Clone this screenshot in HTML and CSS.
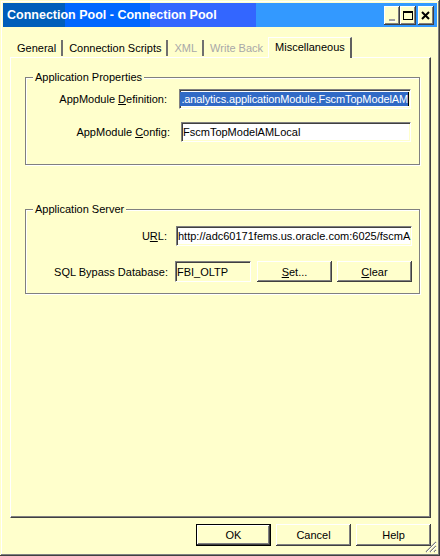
FILE: index.html
```html
<!DOCTYPE html>
<html>
<head>
<meta charset="utf-8">
<link rel="stylesheet" href="styles.css">
</head>
<body>
<div class="window">
  <div class="titlebar">
    <span class="title">Connection Pool - Connection Pool</span>
    <div class="ctrls">
      <span class="cbtn"><svg width="16" height="19" viewBox="0 0 16 19"><rect x="5" y="13" width="6" height="2" fill="#a0a0a0"/><rect x="6" y="15" width="6" height="1" fill="#fff"/></svg></span>
      <span class="cbtn"><svg width="16" height="19" viewBox="0 0 16 19"><rect x="3.5" y="5.5" width="9" height="8" fill="none" stroke="#000"/><rect x="3" y="5" width="10" height="2" fill="#000"/></svg></span>
      <span class="cbtn close"><svg width="16" height="19" viewBox="0 0 16 19"><path d="M4 6 L11 13 M11 6 L4 13" stroke="#000" stroke-width="2" fill="none"/></svg></span>
    </div>
  </div>
  <div class="tabs">
    <span class="tab">General</span>
    <span class="tab">Connection Scripts</span>
    <span class="tab disabled">XML</span>
    <span class="tab disabled nosep">Write Back</span>
    <span class="tab active">Miscellaneous</span>
  </div>
  <div class="panel">
    <div class="group g1">
      <span class="legend">Application Properties</span>
      <div class="row r1">
        <span class="lbl">AppModule <u>D</u>efinition:</span>
        <div class="field sel w232"><span class="hl">.analytics.applicationModule.FscmTopModelAM</span></div>
      </div>
      <div class="row r2">
        <span class="lbl">AppModule <u>C</u>onfig:</span>
        <div class="field w230">FscmTopModelAMLocal</div>
      </div>
    </div>
    <div class="group g2">
      <span class="legend">Application Server</span>
      <div class="row r3">
        <span class="lbl">U<u>R</u>L:</span>
        <div class="field w236">http://adc60171fems.us.oracle.com:6025/fscmA</div>
      </div>
      <div class="row r4">
        <span class="lbl">SQL Bypass Database:</span>
        <div class="field ro w76">FBI_OLTP</div>
        <button class="btn"><span><u>S</u>et...</span></button>
        <button class="btn"><span><u>C</u>lear</span></button>
      </div>
    </div>
  </div>
  <div class="footer">
    <button class="btn default">OK</button>
    <button class="btn">Cancel</button>
    <button class="btn">Help</button>
  </div>
  <svg class="grip" width="12" height="12" viewBox="0 0 12 12">
    <path d="M11 1 L1 11 M11 5 L5 11 M11 9 L9 11" stroke="#808080" stroke-width="1.2"/>
    <path d="M11 2 L2 11 M11 6 L6 11 M11 10 L10 11" stroke="#fff" stroke-width="1"/>
  </svg>
</div>
</body>
</html>
```
FILE: styles.css
```css
* { box-sizing: border-box; }
body {
  margin: 0;
  background: #FFFFCC;
  font-family: "Liberation Sans", Arial, sans-serif;
  font-size: 11px;
  color: #000;
}
.window {
  position: relative;
  width: 440px;
  height: 556px;
  padding: 3px;
  background: #FFFFCC;
  box-shadow: inset -1px -1px 0 #404040, inset 1px 1px 0 #FFFFCC,
              inset -2px -2px 0 #808080, inset 2px 2px 0 #ffffff;
  display: flex;
  flex-direction: column;
}
.titlebar {
  height: 24px;
  display: flex;
  align-items: center;
  justify-content: space-between;
  padding: 0 3px 0 4px;
  background: linear-gradient(to right, #005EBA 0 62px, #0066FF 62px 147px, #3366FF 147px 253px, #3399FF 253px);
}
.title {
  color: #fff;
  font-weight: bold;
  font-size: 12.5px;
}
.ctrls { display: flex; align-items: center; }
.cbtn {
  width: 16px;
  height: 19px;
  background: #FFFFCC;
  box-shadow: inset -1px -1px 0 #404040, inset 1px 1px 0 #fff, inset -2px -2px 0 #808080;
  display: flex;
}
.cbtn.close { margin-left: 2px; }
.tabs {
  height: 30px;
  display: flex;
  align-items: flex-end;
  padding-left: 8px;
}
.tab {
  height: 16px;
  line-height: 16px;
  padding: 0 5px 0 6px;
  margin-bottom: 1px;
  border-right: 2px solid #707070;
  white-space: nowrap;
  color: #000;
}
.tab.disabled { color: #a8a8a8; }
.tab.nosep { border-right: none; }
.tab.active {
  position: relative;
  z-index: 1;
  height: 21px;
  line-height: 19px;
  margin-bottom: -1px;
  padding: 0 5px 0 6px;
  border-top: 1px solid #fff;
  border-left: 1px solid #fff;
  border-right: 2px solid #606060;
  background: #FFFFCC;
  color: #000;
}
.panel {
  margin-left: 7px;
  width: 421px;
  height: 461px;
  border-top: 1px solid #fff;
  border-left: 1px solid #fff;
  border-right: 1px solid #404040;
  border-bottom: 1px solid #404040;
  box-shadow: inset -1px -1px 0 #808080;
  padding: 19px 0 0 14px;
}
.group {
  position: relative;
  width: 395px;
  border: 1px solid #808080;
  box-shadow: 1px 1px 0 #fff, inset 1px 1px 0 #fff;
  display: flex;
  flex-direction: column;
}
.g1 { height: 88px; padding: 11px 8px 0 0; gap: 13px; }
.g2 { height: 85px; margin-top: 44px; padding: 16px 7px 0 0; gap: 15px; }
.legend {
  position: absolute;
  top: -8px;
  left: 7px;
  padding: 0 2px;
  line-height: 14px;
  background: #FFFFCC;
}
.row {
  display: flex;
  justify-content: flex-end;
  align-items: center;
}
.r1 .lbl { margin-right: 12px; }
.r2 .lbl { margin-right: 11px; }
.r3 .lbl { margin-right: 9px; }
.r4 .lbl { margin-right: 7px; }
.field {
  height: 20px;
  background: #fff;
  border: 1px solid;
  border-color: #808080 #fff #fff #808080;
  box-shadow: inset 1px 1px 0 #404040, inset -1px -1px 0 #FFFFCC;
  padding: 0 1px 0 1px;
  display: flex;
  align-items: center;
  overflow: hidden;
  white-space: nowrap;
}
.field.sel { justify-content: flex-end; padding: 0 2px 0 1px; }
.hl {
  background: #316AC5;
  color: #fff;
  line-height: 14px;
  letter-spacing: -0.12px;
  padding-left: 3px;
  box-shadow: 1px 0 0 #000;
}
.field.ro { background: #FFFFCC; height: 21px; }
.w232 { width: 232px; }
.w230 { width: 230px; }
.w236 { width: 236px; }
.w76 { width: 76px; }
.btn {
  width: 75px;
  height: 22px;
  padding: 0;
  border: none;
  background: #FFFFCC;
  font: inherit;
  color: #000;
  box-shadow: inset -1px -1px 0 #404040, inset 1px 1px 0 #fff, inset -2px -2px 0 #808080;
  display: flex;
  align-items: center;
  justify-content: center;
}
.r4 .btn { height: 21px; margin-left: 6px; }
.r4 .btn + .btn { margin-left: 5px; }
.btn.default {
  box-shadow: inset 0 0 0 1px #000, inset -2px -2px 0 #404040, inset 2px 2px 0 #fff, inset -3px -3px 0 #808080;
}
.footer {
  margin-top: 6px;
  display: flex;
  justify-content: flex-end;
  gap: 5px;
  padding-right: 6px;
}
.grip {
  position: absolute;
  right: 3px;
  bottom: 3px;
}
```
